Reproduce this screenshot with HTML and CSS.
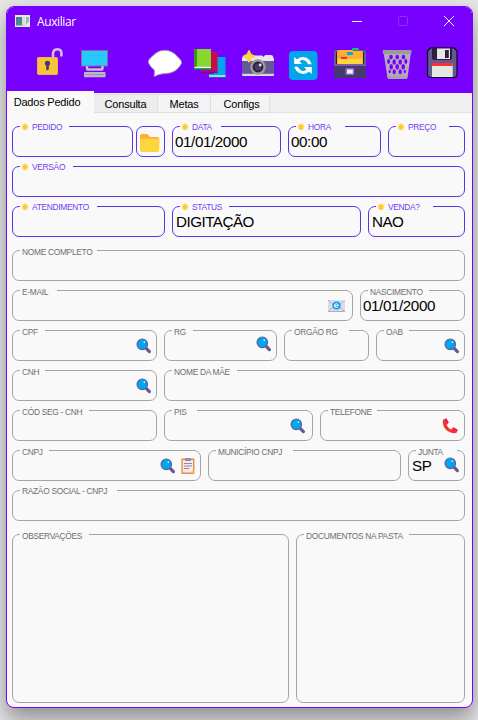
FILE: index.html
```html
<!DOCTYPE html>
<html lang="pt-BR">
<head>
<meta charset="utf-8">
<title>Auxiliar</title>
<link rel="stylesheet" href="styles.css">
</head>
<body>
<svg class="defs" aria-hidden="true">
  <defs>
    <linearGradient id="scene" x1="0" y1="0" x2="1" y2="1"><stop offset="0" stop-color="#4777a8"/><stop offset="1" stop-color="#4aa564"/></linearGradient>
    <symbol id="sun" viewBox="0 0 10 10">
      <path d="M5 .3 6 2 8.3 1.7 8 4 9.7 5 8 6 8.3 8.3 6 8 5 9.7 4 8 1.7 8.3 2 6 .3 5 2 4 1.7 1.7 4 2Z" fill="#fddb62" stroke="#ffe9a8" stroke-width=".5"/>
      <circle cx="5" cy="5" r="3" fill="#fccb35"/>
    </symbol>
    <symbol id="lens" viewBox="0 0 16 16">
      <path d="M10 10.2 13.4 13.6" stroke="#635994" stroke-width="3.2" stroke-linecap="round"/>
      <circle cx="6.3" cy="6.3" r="5.3" fill="#00a6ed" stroke="#635994" stroke-width="1.1"/>
      <circle cx="8.3" cy="4.2" r=".9" fill="#b9e8ff"/>
    </symbol>
  </defs>
</svg>
<main class="window">
  <header class="titlebar">
    <svg class="app-icon" width="15" height="12" viewBox="0 0 15 12"><path d="M0 0H15V12H0Z" fill="#e9eaec"/><path d="M1 2H10V10.5H1Z" fill="url(#scene)"/><path d="M7 2H10V10.5H7Z" fill="#d7dfe4"/><path d="M11 2H14V6L11 10Z" fill="#8fc0aa"/></svg>
    <h1>Auxiliar</h1>
    <div class="controls">
      <svg width="10" height="10" viewBox="0 0 10 10"><path d="M0 5.5H10" stroke="#fff"/></svg>
      <svg width="10" height="10" viewBox="0 0 10 10"><rect x=".5" y=".5" width="9" height="9" rx="1" fill="none" stroke="#9230ff"/></svg>
      <svg width="10" height="10" viewBox="0 0 10 10"><path d="M0 0 10 10M10 0 0 10" stroke="#fff"/></svg>
    </div>
  </header>
  <nav class="toolbar">
    <svg viewBox="0 0 34 34"><path d="M19 10V7Q19 2.2 23.4 2.2T27.4 7V9.5" fill="none" stroke="#cdc4d6" stroke-width="2.5"/><rect x="3" y="10" width="21" height="18" rx="2" fill="#f9c23c"/><rect x="3.5" y="10.5" width="20" height="17" rx="2" fill="none" stroke="#e9a948" stroke-width=".7"/><circle cx="13.5" cy="16.3" r="2.6" fill="#433b6b"/><path d="M12.2 17H14.8V22.5Q13.5 24 12.2 22.5Z" fill="#433b6b"/></svg>
    <svg viewBox="0 0 34 34"><path d="M3 3H30V19.5H3Z" fill="#8368a8"/><path d="M4 4H29V18.5H4Z" fill="#26c9fc"/><path d="M9 19V21.3Q9 22.6 10.5 22.6H23Q24.5 22.6 24.5 21.3V19" fill="none" stroke="#c5bfce" stroke-width="2.5"/><rect x="6" y="25" width="21.5" height="5.2" rx=".8" fill="#bdb7c6"/><path d="M7.5 27.6H26" stroke="#858093" stroke-dasharray="1.3 .8"/></svg>
    <svg viewBox="0 0 34 34"><path d="M17 3.3C22 3.3 26 5.8 29 9.2 32 12.3 34 13.8 33.4 16.4 31.5 20.6 27 25.3 20.5 26.2 15.5 27 12.5 26.2 6.2 29.7L6.4 23C2 19.6.3 16 .3 14.5.8 11.8 4 9.6 6.6 7.2 9.4 4.6 13 3.3 17 3.3Z" fill="#fff" stroke="#a291b3" stroke-width="1"/></svg>
    <svg viewBox="0 0 34 34"><path d="M21 10H32.5V30.5H16V27H21Z" fill="#00a6ed"/><path d="M16 29H32.5" stroke="#d5e9f2" stroke-width="1.4"/><path d="M16 30.5H32.5" stroke="#126e9f"/><path d="M16 4.7H23Q24.5 5 24.5 7V25.8H8V22H16Z" fill="#ca0b4a"/><path d="M8 23.7H24.5" stroke="#8f0de0"/><path d="M8 25.3H24.5" stroke="#900a3a"/><path d="M1 2H18V22H1Z" fill="#86d72f"/><path d="M1 2H4V20H1Z" fill="#44911b"/><path d="M2 20.5H18" stroke="#f4f4f4" stroke-width="1.4"/><path d="M1 22H18" stroke="#008463" stroke-width="1.4"/></svg>
    <svg viewBox="0 0 34 34"><path d="M1 12Q1 9 4 8.5H21L23 10V9.5Q23 8 25 8H30Q32 8 32 9.5L33 12V27.5Q33 29 31 29H3Q1 29 1 27Z" fill="#e6e6e6"/><path d="M1 14H33V27H1Z" fill="#635994"/><path d="M1 27.7H33" stroke="#d3d3d3" stroke-width="1.8"/><circle cx="17" cy="20" r="7.8" fill="#9b9b9b"/><circle cx="17" cy="20" r="5.4" fill="#321b41"/><circle cx="17" cy="20" r="3.5" fill="#433b6b"/><circle cx="19.2" cy="18" r="1.4" fill="#e6e6e6"/><path d="M8 3.7 9.8 7.4 13.7 9.3 9.8 11.2 8 15 6.2 11.2 2.3 9.3 6.2 7.4Z" fill="#fcd53f" stroke="#fcd53f" stroke-linejoin="round" stroke-width="1.4"/></svg>
    <svg viewBox="0 0 34 34"><rect x="3" y="4" width="28.5" height="29" rx="4" fill="#00a6ed"/><path d="M8.2 10 11 12.2Q18 7.3 23.8 13.2L25.8 17.3H22Q20.4 13.2 16.5 13Q14.7 13 13.6 14.4L16 17H8.2Z" fill="#fff"/><path d="M25.8 27 23 24.8Q16 29.7 10.2 23.8L8.2 19.7H12Q13.6 23.8 17.5 24Q19.3 24 20.4 22.6L18 20H25.8Z" fill="#fff"/></svg>
    <svg viewBox="0 0 34 34"><path d="M19 4V2Q19 1 20.2 1H24.5Q26 1 26 3V5H19Z" fill="#00d26a"/><path d="M1 5Q1 3 3 3H31Q33 3 33 5V18H1Z" fill="#635994"/><path d="M3 5H31V17H3Z" fill="#321b41"/><path d="M4 6Q4 3 6 3H19L21 4H29Q30 4 30 6V17H4Z" fill="#ffb02e"/><rect x="14" y="5" width="6" height="3" fill="#00a6ed"/><path d="M4 8H12L14 9.5H30V17H4Z" fill="#ff9f32"/><path d="M4 11H14L16 9.5H29L30 11V17H4Z" fill="#ffb02e"/><path d="M5 12H29V17H5Z" fill="#fcd53f"/><path d="M8 11H14" stroke="#f8312f" stroke-width="2"/><rect x="1" y="17" width="32" height="14" rx="1" fill="#433b6b"/><path d="M1 18H33" stroke="#8d65c5" stroke-width="1.5"/><rect x="12.3" y="21" width="9" height="7" rx="1" fill="#8d65c5"/><rect x="14" y="22.5" width="5.8" height="4.2" fill="#f4f4f4"/></svg>
    <svg viewBox="0 0 34 34"><path d="M3.5 5 7.5 31H27.5L31 5Z" fill="#b4acbc"/><g fill="#7700ff"><ellipse cx="11" cy="10" rx="1.8" ry="2.2"/><ellipse cx="17.2" cy="10" rx="1.8" ry="2.2"/><ellipse cx="23.4" cy="10" rx="1.8" ry="2.2"/><ellipse cx="8.6" cy="14.5" rx="1.5" ry="2.4"/><ellipse cx="14.2" cy="15" rx="1.8" ry="2.7"/><ellipse cx="20.2" cy="15" rx="1.8" ry="2.7"/><ellipse cx="25.8" cy="14.5" rx="1.5" ry="2.4"/><ellipse cx="11.2" cy="19.8" rx="1.8" ry="2.7"/><ellipse cx="17.2" cy="19.8" rx="1.8" ry="2.7"/><ellipse cx="23.2" cy="19.8" rx="1.8" ry="2.7"/><ellipse cx="14.2" cy="24.8" rx="1.7" ry="2.5"/><ellipse cx="20.2" cy="24.8" rx="1.7" ry="2.5"/><ellipse cx="9.7" cy="24.6" rx="1.1" ry="1.8"/><ellipse cx="24.8" cy="24.6" rx="1.1" ry="1.8"/></g><path d="M7.5 28.4H27.5L27 32H8Z" fill="#aaa2b1"/><rect x="2.7" y="3" width="28.8" height="4" rx="1.2" fill="#9b9b9b"/></svg>
    <svg viewBox="0 0 34 34"><path d="M5.5.8H29L32 4V27Q32 30.5 28.5 30.5H6Q2.5 30.5 2.5 27V4Z" fill="#635994" stroke="#100918" stroke-width="1.2"/><path d="M7 1H27V11Q27 13 25 13H9Q7 13 7 11Z" fill="#321b41"/><path d="M12 1.4H25V12H12Z" fill="#e6e6e6"/><rect x="20" y="3" width="3.8" height="8" fill="#321b41"/><path d="M7 16H27.7V30H7Z" fill="#e6e6e6"/><path d="M7 16H27.7V19H7Z" fill="#f8312f"/></svg>
  </nav>
  <nav class="tabs">
    <a class="tab active">Dados Pedido</a><a class="tab consulta">Consulta</a><a class="tab metas">Metas</a><a class="tab configs">Configs</a>
  </nav>
  <form class="form">
    <section class="group required">
      <div class="row order">
        <div class="field"><label class="w49"><svg><use href="#sun"/></svg>PEDIDO</label></div>
        <button type="button" class="field folder" aria-label="Pasta"><svg width="20" height="18" viewBox="0 0 20 18"><path d="M0 2Q0 0 2 0H6.5Q7.5 0 8.3 1L10 3H18Q19.3 3 19.3 4.5V9H0Z" fill="#ffb02e"/><path d="M0 5.5Q0 4.8 1.5 4.8H18Q19.3 4.8 19.3 6V16Q19.3 18 17.5 18H2Q0 18 0 16Z" fill="#fcd53f"/></svg></button>
        <div class="field"><label class="w41"><svg><use href="#sun"/></svg>DATA</label><span class="value">01/01/2000</span></div>
        <div class="field"><label class="w49"><svg><use href="#sun"/></svg>HORA</label><span class="value">00:00</span></div>
        <div class="field"><label class="w53"><svg><use href="#sun"/></svg>PREÇO</label></div>
      </div>
      <div class="row"><div class="field"><label class="w53"><svg><use href="#sun"/></svg>VERSÃO</label></div></div>
      <div class="row service">
        <div class="field"><label class="w77"><svg><use href="#sun"/></svg>ATENDIMENTO</label></div>
        <div class="field"><label class="w49"><svg><use href="#sun"/></svg>STATUS</label><span class="value word">DIGITAÇÃO</span></div>
        <div class="field"><label class="w57"><svg><use href="#sun"/></svg>VENDA?</label><span class="value word">NAO</span></div>
      </div>
    </section>
    <section class="group">
      <div class="row"><div class="field"><label class="w77">NOME COMPLETO</label></div></div>
      <div class="row mail">
        <div class="field"><label class="w37">E-MAIL</label><span class="icons mail-icon"><svg width="17" height="12" viewBox="0 0 17 12"><path d="M0 0H17V12H0Z" fill="#e1d8ec"/><path d="M0 0 8.5 8 17 0M0 12 6 6M17 12 11 6" fill="none" stroke="#b4a8c5" stroke-width=".9"/><path d="M0 11.5H17" stroke="#b4a8c5"/><circle cx="8.5" cy="5.5" r="4.1" fill="#00a6ed"/><path d="M6.5 5.7H10.5Q10.3 3.7 8.4 3.7T6.4 5.7T8.5 7.4H10" fill="none" stroke="#fff" stroke-width="1"/></svg></span></div>
        <div class="field"><label class="w61">NASCIMENTO</label><span class="value">01/01/2000</span></div>
      </div>
      <div class="row ids">
        <div class="field"><label class="w25">CPF</label><span class="icons"><svg><use href="#lens"/></svg></span></div>
        <div class="field"><label class="w21">RG</label><span class="icons raised"><svg><use href="#lens"/></svg></span></div>
        <div class="field"><label class="w57">ORGÃO RG</label></div>
        <div class="field"><label class="w25">OAB</label><span class="icons"><svg><use href="#lens"/></svg></span></div>
      </div>
      <div class="row license">
        <div class="field"><label class="w25">CNH</label><span class="icons"><svg><use href="#lens"/></svg></span></div>
        <div class="field"><label class="w65">NOME DA MÃE</label></div>
      </div>
      <div class="row contact">
        <div class="field"><label class="w69">CÓD SEG - CNH</label></div>
        <div class="field"><label class="w25">PIS</label><span class="icons pis"><svg><use href="#lens"/></svg></span></div>
        <div class="field"><label class="w49">TELEFONE</label><span class="icons phone"><svg viewBox="0 0 16 16"><path d="M1.2 1.6 3.8.7 6.3 5 4.5 7Q6 10 9 11.5L11 9.8 15.5 12.2 14.6 14.8Q12 16 8 14.3Q2 11.5 1 6Q.5 3 1.2 1.6Z" fill="#f8312f"/><path d="M3.8.7 6.3 5M11 9.8 15.5 12.2" stroke="#ca0b7a" stroke-width="1.3"/></svg></span></div>
      </div>
      <div class="row company">
        <div class="field"><label class="w29">CNPJ</label><span class="icons pair"><svg><use href="#lens"/></svg><svg class="clip" viewBox="0 0 14 16"><path d="M1.1 1.2H12.7V15.3H1.1Z" fill="#f3e9f3" stroke="#e8903e" stroke-width="1.4"/><path d="M4 0H10V3H4Z" fill="#998ea4"/><path d="M3 5.5H11M3 8H11M3 10.5H8" stroke="#948aa0" stroke-width="1.1"/><path d="M9 15.5 13 11.5V15.5Z" fill="#f3ad61"/></svg></span></div>
        <div class="field"><label class="w77">MUNICÍPIO CNPJ</label></div>
        <div class="field"><label class="w41">JUNTA</label><span class="value word">SP</span><span class="icons raised junta"><svg><use href="#lens"/></svg></span></div>
      </div>
      <div class="row"><div class="field"><label class="w97 high">RAZÃO SOCIAL - CNPJ</label></div></div>
    </section>
    <section class="group">
      <div class="row notes">
        <div class="field"><label class="w69">OBSERVAÇÕES</label></div>
        <div class="field"><label class="w105">DOCUMENTOS NA PASTA</label></div>
      </div>
    </section>
  </form>
</main>
</body>
</html>
```
FILE: styles.css
```css
* { box-sizing: border-box; }
body {
  margin: 0;
  width: 478px;
  height: 720px;
  padding: 6px 5px 12px 6px;
  overflow: hidden;
  background: #e6e6e6;
  font-family: "Liberation Sans", Arial, sans-serif;
}
.defs { position: absolute; width: 0; height: 0; }
svg { display: block; }

.window {
  width: 467px;
  height: 702px;
  border: 1px solid #7700ff;
  border-radius: 8px;
  overflow: hidden;
  background: #f9f9f9;
  box-shadow: 0 16px 22px rgba(0, 0, 0, .27), 0 2px 14px rgba(0, 0, 0, .15);
}
.titlebar {
  display: flex;
  align-items: center;
  height: 29px;
  padding-left: 8px;
  background: #7700ff;
}
.titlebar h1 {
  flex: 1;
  margin: 1px 0 0 7px;
  color: #fff;
  font: 400 12px/16px "Open Sans", "Noto Sans", sans-serif;
  letter-spacing: -.4px;
}
.app-icon { margin-top: -1px; }
.controls { display: flex; gap: 36px; margin-top: -1px; padding-right: 18px; }
.toolbar {
  display: grid;
  grid-template-columns: 44px 70px 45px 48px 45px 47px 47px 45px 34px;
  height: 57px;
  padding: 11px 0 0 27px;
  background: #7700ff;
}
.toolbar svg { width: 34px; height: 34px; }

.tabs {
  display: flex;
  align-items: flex-end;
  height: 20px;
  background: #efefef;
  box-shadow: inset 0 -1px #e2e2e2;
}
.tab {
  height: 19px;
  border: 1px solid #e0e0e0;
  border-left: 0;
  background: #f3f3f3;
  color: #000;
  font-size: 11px;
  letter-spacing: -.2px;
  line-height: 18px;
  text-align: center;
}
.tab.active {
  width: 87px;
  height: 22px;
  padding-right: 7px;
  border: 0;
  background: #f9f9f9;
  line-height: 22px;
}
.consulta { width: 64px; background: #ececec; }
.metas { width: 53px; }
.configs { width: 59px; padding-left: 3px; }

.form { display: grid; gap: 13px; padding: 13px 7px 0 5px; }
.group { display: grid; gap: 9px; }
.row { display: grid; grid-template-columns: 453px; column-gap: 7px; height: 31px; }
.order { grid-template-columns: 121px 25px 109px 93px 77px; }
.order .folder { width: 29px; margin: 0 0 0 -4px; }
.service { grid-template-columns: 153px 189px 97px; }
.mail { grid-template-columns: 341px 105px; }
.ids { grid-template-columns: 145px 113px 85px 89px; }
.license { grid-template-columns: 145px 301px; }
.contact { grid-template-columns: 145px 149px 145px; }
.company { grid-template-columns: 189px 193px 57px; }
.notes { grid-template-columns: 277px 169px; height: 169px; }

.field {
  position: relative;
  display: flex;
  border: 1px solid #a5a5a5;
  border-radius: 7px;
  background: #f9f9f9;
}
.required .field { border-color: #5a34e4; }
.folder { align-items: center; justify-content: center; padding: 2px 1px 0 0; }

/* The label sits over the top border and interrupts it. */
.field label {
  position: absolute;
  top: -4px;
  left: 7px;
  height: 9px;
  padding-left: 2px;
  background: #f9f9f9;
  color: #6e6e6e;
  font-size: 8.4px;
  letter-spacing: -.3px;
  line-height: 10px;
  white-space: nowrap;
}
.field label.high { line-height: 8px; }
.required label { display: flex; gap: 3px; padding-left: 1px; color: #7440f0; line-height: 9px; }
label svg { width: 8px; height: 8px; }
.w21 { width: 21px; }
.w25 { width: 25px; }
.w29 { width: 29px; }
.w37 { width: 37px; }
.w41 { width: 41px; }
.w49 { width: 49px; }
.w53 { width: 53px; }
.w57 { width: 57px; }
.w61 { width: 61px; }
.w65 { width: 65px; }
.w69 { width: 69px; }
.w77 { width: 77px; }
.w97 { width: 97px; }
.w105 { width: 105px; }

.value { padding: 6px 0 0 2px; color: #000; font-size: 15.2px; letter-spacing: -.4px; line-height: 18px; }
.word { padding-left: 3px; letter-spacing: -.5px; }
.icons { display: flex; gap: 5px; margin: 7px 4px 0 auto; }
.icons svg { width: 16px; height: 16px; }
.icons.raised { margin-top: 5px; }
.icons.junta { margin-top: 6px; }
.icons.pis { margin-right: 6px; }
.icons.phone { margin-right: 6px; }
.icons.pair { margin-right: 5px; }
.icons .clip { width: 14px; }
.icons.mail-icon { margin: 9px 7px 0 auto; }
.icons.mail-icon svg { width: 17px; height: 12px; }
```
